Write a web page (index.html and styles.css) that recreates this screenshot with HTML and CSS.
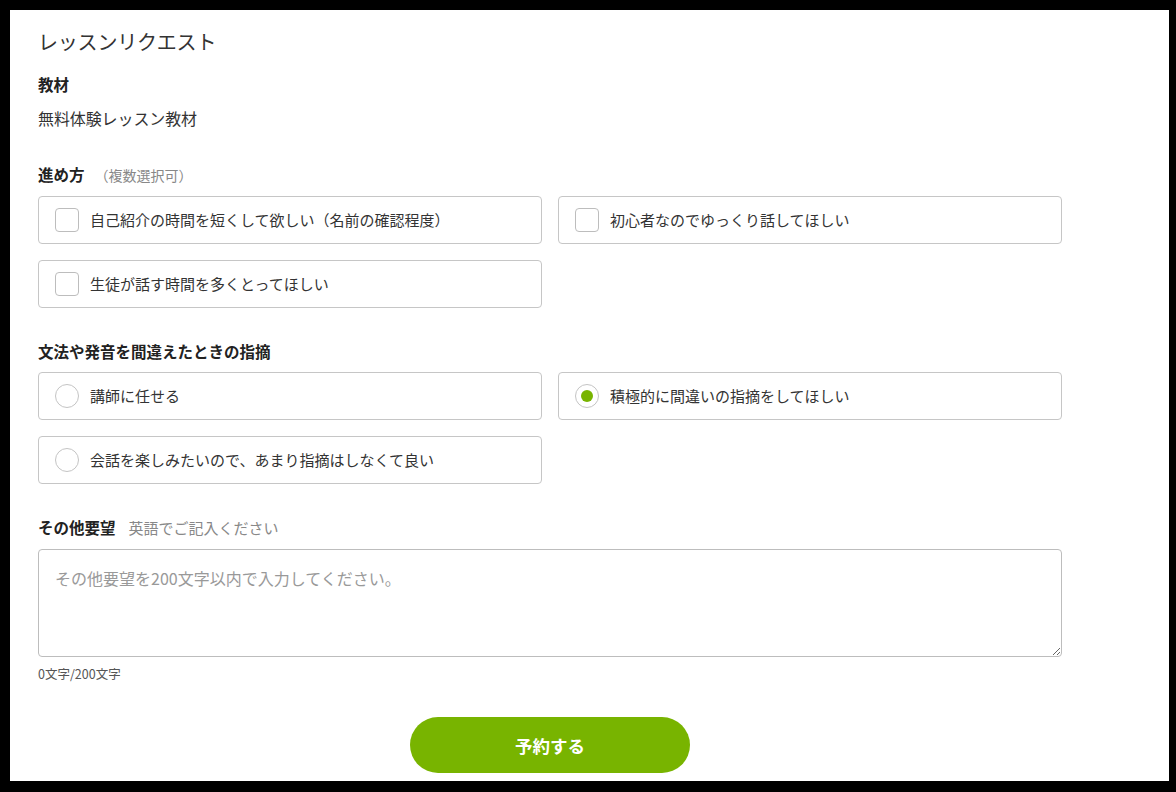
FILE: index.html
```html
<!DOCTYPE html>
<html lang="ja">
<head>
<meta charset="utf-8">
<title>レッスンリクエスト</title>
<link rel="stylesheet" href="styles.css">
</head>
<body>
<div class="frame">
  <h1 class="title">レッスンリクエスト</h1>

  <h2 class="label label-first">教材</h2>
  <p class="value">無料体験レッスン教材</p>

  <h2 class="label label-section">進め方<span class="note note-paren">（複数選択可）</span></h2>
  <div class="options">
    <div class="option"><span class="check"></span><span class="option-text">自己紹介の時間を短くして欲しい（名前の確認程度）</span></div>
    <div class="option"><span class="check"></span><span class="option-text">初心者なのでゆっくり話してほしい</span></div>
    <div class="option"><span class="check"></span><span class="option-text">生徒が話す時間を多くとってほしい</span></div>
  </div>

  <h2 class="label label-section label-tight">文法や発音を間違えたときの指摘</h2>
  <div class="options">
    <div class="option"><span class="radio"></span><span class="option-text">講師に任せる</span></div>
    <div class="option"><span class="radio radio-on"></span><span class="option-text">積極的に間違いの指摘をしてほしい</span></div>
    <div class="option"><span class="radio"></span><span class="option-text">会話を楽しみたいので、あまり指摘はしなくて良い</span></div>
  </div>

  <h2 class="label label-section label-tight">その他要望<span class="note">英語でご記入ください</span></h2>
  <textarea class="request" placeholder="その他要望を200文字以内で入力してください。"></textarea>
  <p class="counter">0文字/200文字</p>

  <div class="actions">
    <button class="submit" type="button">予約する</button>
  </div>
</div>
</body>
</html>
```

FILE: styles.css
```css
* {
  box-sizing: border-box;
}

html, body {
  margin: 0;
  padding: 0;
  background: #000;
}

body {
  font-family: "Noto Sans CJK JP", "Noto Sans", sans-serif;
  color: #333;
}

.frame {
  margin: 10px 0 0 10px;
  width: 1159px;
  height: 771px;
  background: #fff;
  overflow: hidden;
  padding: 18px 0 0 28px;
}

.title {
  margin: 0;
  font-size: 20px;
  line-height: 28px;
  font-weight: 400;
  color: #333;
  letter-spacing: -0.2px;
}

.label {
  margin: 0;
  font-size: 15.5px;
  line-height: 24px;
  font-weight: 700;
  color: #222;
  display: flex;
  align-items: baseline;
}

.label-first {
  margin-top: 16px;
}

.label-section {
  margin-top: 32px;
}

.label-tight {
  margin-top: 31px;
}

.note {
  font-size: 15px;
  font-weight: 400;
  color: #888;
  margin-left: 13px;
}

.note-paren {
  font-size: 14px;
  margin-left: 10px;
}

.value {
  margin: 10px 0 0;
  font-size: 16px;
  line-height: 24px;
  color: #333;
  letter-spacing: -0.1px;
}

.options {
  margin-top: 9px;
  width: 1024px;
  display: grid;
  grid-template-columns: 504px 504px;
  column-gap: 16px;
  row-gap: 16px;
}

.option {
  height: 48px;
  border: 1px solid #c6c6c6;
  border-radius: 4px;
  display: flex;
  align-items: center;
  padding-left: 16px;
}

.option-text {
  margin-left: 11px;
  font-size: 15px;
  line-height: 22px;
  color: #333;
}

.check {
  width: 24px;
  height: 24px;
  border: 1px solid #bdbdbd;
  border-radius: 4px;
  flex: none;
}

.radio {
  width: 24px;
  height: 24px;
  border: 1px solid #c4c4c4;
  border-radius: 50%;
  flex: none;
  display: flex;
  align-items: center;
  justify-content: center;
}

.radio-on::after {
  content: "";
  width: 12px;
  height: 12px;
  border-radius: 50%;
  background: #78b400;
}

.request {
  display: block;
  margin-top: 9px;
  width: 1024px;
  height: 108px;
  border: 1px solid #bdbdbd;
  border-radius: 4px;
  padding: 16px 16px;
  font-family: "Noto Sans CJK JP", "Noto Sans", sans-serif;
  font-size: 16px;
  line-height: 24px;
  color: #333;
  resize: vertical;
  outline: none;
}

.request::placeholder {
  color: #999;
}

.counter {
  margin: 8px 0 0;
  font-size: 12.5px;
  line-height: 18px;
  color: #555;
}

.actions {
  width: 1024px;
  margin-top: 34px;
  padding-left: 372px;
}

.submit {
  width: 280px;
  height: 56px;
  border: none;
  border-radius: 28px;
  background: #78b400;
  color: #fff;
  font-family: "Noto Sans CJK JP", "Noto Sans", sans-serif;
  font-size: 17.5px;
  font-weight: 700;
  padding: 0;
  cursor: pointer;
}
```
